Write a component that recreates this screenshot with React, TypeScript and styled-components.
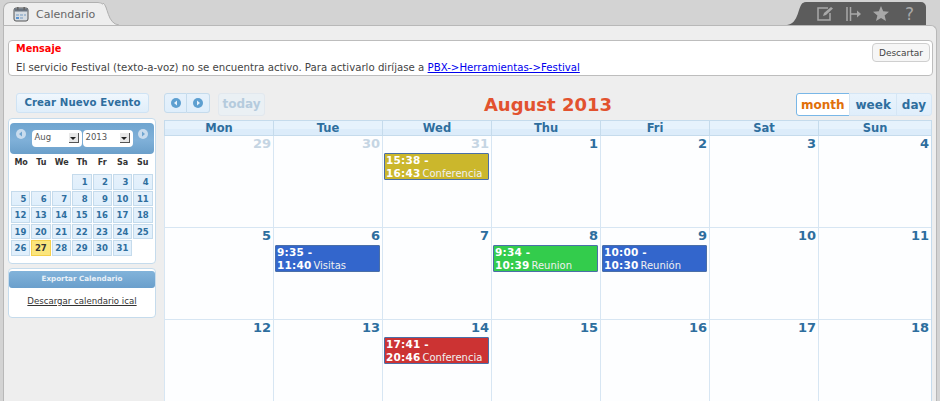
import React from 'react'
import styled, { createGlobalStyle } from 'styled-components'

const GlobalStyle = createGlobalStyle`
  html, body { margin: 0; padding: 0; }
  body { background: #d3d3d3; font-family: "DejaVu Sans", Verdana, sans-serif; overflow: hidden; }
`

type Ev = { start: string; end: string; title: string; color: string }
type Cell = { day: number; muted?: boolean; event?: Ev }

const weeks: Cell[][] = [
  [
    { day: 29, muted: true },
    { day: 30, muted: true },
    { day: 31, muted: true, event: { start: '15:38', end: '16:43', title: 'Conferencia', color: '#cbb72c' } },
    { day: 1 }, { day: 2 }, { day: 3 }, { day: 4 },
  ],
  [
    { day: 5 },
    { day: 6, event: { start: '9:35', end: '11:40', title: 'Visitas', color: '#3366cc' } },
    { day: 7 },
    { day: 8, event: { start: '9:34', end: '10:39', title: 'Reunion', color: '#33cc4c' } },
    { day: 9, event: { start: '10:00', end: '10:30', title: 'Reunión', color: '#3366cc' } },
    { day: 10 }, { day: 11 },
  ],
  [
    { day: 12 }, { day: 13 },
    { day: 14, event: { start: '17:41', end: '20:46', title: 'Conferencia', color: '#cc3333' } },
    { day: 15 }, { day: 16 }, { day: 17 }, { day: 18 },
  ],
]

const miniDays: (number | null)[] = [null, null, null, ...Array.from({ length: 31 }, (_, i) => i + 1)]

const Page = styled.div`
  width: 940px;
  height: 401px;
  overflow: hidden;
`

const TabRow = styled.div`
  display: flex;
  justify-content: space-between;
  align-items: flex-end;
  height: 25px;
  padding: 0 14px 0 3px;
`

const Tab = styled.div`
  position: relative;
  display: flex;
  align-items: center;
  gap: 7px;
  width: 104px;
  height: 23px;
  padding-left: 9px;
  box-sizing: border-box;
  background: #eeeeee;
  border: 1px solid #b0b0b0;
  border-bottom: none;
  border-radius: 7px 9px 0 0;
  color: #666;
  font-size: 11px;
  svg.flare { position: absolute; right: -13px; bottom: 0; }
`

const ToolTab = styled.div`
  position: relative;
  display: flex;
  align-items: center;
  gap: 12px;
  width: 124px;
  height: 23px;
  padding-left: 15px;
  box-sizing: border-box;
  background: #5c5c5c;
  border-radius: 4px 5px 0 0;
  color: #a8a8a8;
  font-size: 17px;
  svg.flare { position: absolute; left: -15px; bottom: 0; }
`

const HelpMark = styled.span`
  margin-left: 4px;
`

const Panel = styled.div`
  margin: 0 3px;
  height: 376px;
  box-sizing: border-box;
  padding: 14px 3px 0 4px;
  background: #eeeeee;
  border: 1px solid #b8b8b8;
  border-bottom: none;
  border-radius: 0 6px 0 0;
`

const Message = styled.div`
  position: relative;
  height: 36px;
  box-sizing: border-box;
  padding: 2px 7px;
  background: #fff;
  border: 1px solid #bdbdbd;
  border-radius: 4px;
  font-size: 10.2px;
  color: #444;
`

const MessageTitle = styled.div`
  color: #ff0000;
  font-weight: bold;
  font-size: 9.7px;
  line-height: 12px;
  margin-bottom: 7px;
`

const MessageLink = styled.a`
  color: #0000ee;
  text-decoration: underline;
`

const Dismiss = styled.button`
  position: absolute;
  top: 2px;
  right: 2px;
  width: 58px;
  height: 19px;
  padding: 0;
  background: #f6f6f6;
  border: 1px solid #cfcfcf;
  border-radius: 4px;
  color: #444;
  font: 9px "DejaVu Sans", sans-serif;
`

const Columns = styled.div`
  display: flex;
  gap: 8px;
  margin-top: 17px;
`

const Sidebar = styled.div`
  flex: 0 0 148px;
  display: flex;
  flex-direction: column;
  gap: 4px;
`

const CreateButton = styled.div`
  align-self: flex-start;
  width: 133px;
  height: 20px;
  margin-left: 8px;
  margin-bottom: 1px;
  box-sizing: border-box;
  line-height: 18px;
  text-align: center;
  background: linear-gradient(#f0f7fd, #dfeefa);
  border: 1px solid #cfe3f4;
  border-radius: 3px;
  color: #2e6e9e;
  font-size: 10.2px;
  font-weight: bold;
  letter-spacing: 0.1px;
`

const MiniBox = styled.div`
  background: #fff;
  border: 1px solid #c5dbec;
  border-radius: 4px;
  padding: 4px 1px 1px;
`

const ExportBox = styled.div`
  background: #fff;
  border: 1px solid #c5dbec;
  border-radius: 4px;
  padding-top: 2px;
`

const MiniHeader = styled.div`
  display: flex;
  align-items: flex-start;
  height: 31px;
  box-sizing: border-box;
  padding: 6px 6px 0;
  background: linear-gradient(#6fa5d0 0%, #7fb0d8 55%, #6a9fca 100%);
  border-radius: 4px;
`

const RoundArrow = styled.span`
  flex: none;
  display: flex;
  width: 10px;
  height: 10px;
  border-radius: 50%;
  background: #c9dcee;
  align-items: center;
  justify-content: center;
`

const Selects = styled.div`
  flex: 1;
  display: flex;
  justify-content: center;
  gap: 1px;
  margin-top: 1px;
`

const FakeSelect = styled.div<{ $w: number }>`
  position: relative;
  width: ${({ $w }) => $w}px;
  height: 17px;
  box-sizing: border-box;
  padding-left: 3px;
  background: #fff;
  border-radius: 4px;
  color: #555;
  font-size: 8.5px;
  line-height: 14px;
  &::after {
    content: '';
    position: absolute;
    top: 3px;
    right: 3px;
    width: 9px;
    height: 9px;
    background: #e8e8e8;
    border-right: 1px solid #555;
    border-bottom: 1px solid #555;
  }
  &::before {
    content: '';
    position: absolute;
    z-index: 1;
    top: 7px;
    right: 6px;
    border: 3px solid transparent;
    border-top-color: #222;
    border-bottom: none;
  }
`

const MiniHead = styled.div`
  display: grid;
  grid-template-columns: repeat(7, 1fr);
  padding: 0 1px;
  height: 20px;
  line-height: 18px;
  text-align: center;
  font-size: 8px;
  font-weight: bold;
  color: #333;
`

const MiniGrid = styled.div`
  display: grid;
  grid-template-columns: repeat(7, 19.4px);
  grid-auto-rows: 15.5px;
  gap: 1px;
  padding: 0 1px 6px 1px;
`

const MiniDay = styled.div<{ $today?: boolean }>`
  box-sizing: border-box;
  padding-right: 3px;
  text-align: right;
  line-height: 14px;
  font-size: 8.5px;
  font-weight: bold;
  color: ${({ $today }) => ($today ? '#363636' : '#2e6e9e')};
  background: ${({ $today }) => ($today ? '#fbe57c' : 'linear-gradient(#e6f1fb, #dfeffc)')};
  border: 1px solid ${({ $today }) => ($today ? '#f5cf4a' : '#c5dbec')};
`

const ExportTitle = styled.div`
  height: 17px;
  line-height: 16px;
  text-align: center;
  background: linear-gradient(#82b3da, #6a9fcc);
  border-radius: 3px;
  color: #e9f1f8;
  font-size: 7.2px;
  font-weight: bold;
`

const ExportLink = styled.a`
  display: block;
  padding: 6px 0 9px;
  height: 14px;
  line-height: 14px;
  text-align: center;
  color: #333;
  font-size: 8.6px;
  text-decoration: underline;
`

const Main = styled.div`
  flex: 0 0 768px;
  display: flex;
  flex-direction: column;
`

const Toolbar = styled.div`
  position: relative;
  display: flex;
  justify-content: space-between;
  height: 22px;
  margin-bottom: 5px;
`

const Group = styled.div`
  display: flex;
  gap: 8px;
  align-items: flex-start;
`

const Segments = styled.div`
  display: flex;
`

const ArrowBtn = styled.div`
  display: flex;
  align-items: center;
  justify-content: center;
  width: 23px;
  height: 20px;
  box-sizing: border-box;
  background: linear-gradient(#e6f1fb, #dfeefb);
  border: 1px solid #c5dbec;
  &:first-child { border-radius: 3px 0 0 3px; }
  &:last-child { border-radius: 0 3px 3px 0; border-left: none; }
  span { background: #5d9fd0; }
`

const Today = styled.div`
  width: 47px;
  height: 23px;
  box-sizing: border-box;
  text-align: center;
  line-height: 21px;
  background: #eaf0f4;
  border: 1px solid #e2e8ee;
  border-radius: 3px;
  color: #b5cbdd;
  font-size: 12px;
  font-weight: bold;
`

const MonthTitle = styled.h2`
  position: absolute;
  left: 0;
  right: 0;
  top: 0;
  margin: 0;
  text-align: center;
  color: #e2522e;
  font-size: 18px;
  line-height: 24px;
  font-weight: bold;
  pointer-events: none;
`

const ViewBtn = styled.div<{ $active?: boolean }>`
  height: 23px;
  padding: 0 5px 0 6px;
  box-sizing: border-box;
  line-height: 22px;
  font-size: 12px;
  font-weight: bold;
  margin-left: -1px;
  color: ${({ $active }) => ($active ? '#e17009' : '#2e6e9e')};
  background: ${({ $active }) => ($active ? '#fff' : 'linear-gradient(#e9f3fc, #dfeefb)')};
  border: 1px solid ${({ $active }) => ($active ? '#79b7e7' : '#d5e6f5')};
  &:first-child { border-radius: 3px 0 0 3px; padding: 0 4px; }
  &:last-child { border-radius: 0 3px 3px 0; padding: 0 5px; }
`

const Grid = styled.div`
  display: grid;
  grid-template-columns: repeat(6, 109px) 1fr;
  border: 1px solid #c5dbec;
  border-left: none;
  border-bottom: none;
  background: #fff;
`

const DayName = styled.div`
  height: 14px;
  line-height: 14px;
  text-align: center;
  font-size: 11.5px;
  font-weight: bold;
  color: #2e6e9e;
  background: linear-gradient(#e6f2fc 60%, #dcecfa 60%);
  border-left: 1px solid #c5dbec;
  border-bottom: 1px solid #c5dbec;
`

const DayCell = styled.div`
  height: 92px;
  box-sizing: border-box;
  padding: 0 2px 0 1px;
  background: #fdfeff;
  border-left: 1px solid #d7e6f3;
  border-bottom: 1px solid #d7e6f3;
`

const DayNumber = styled.div<{ $muted?: boolean }>`
  text-align: right;
  height: 16px;
  line-height: 16px;
  font-size: 13px;
  font-weight: bold;
  color: ${({ $muted }) => ($muted ? '#c5d5e3' : '#2e6e9e')};
`

const EventBox = styled.div<{ $bg: string }>`
  margin-top: 1px;
  height: 27px;
  box-sizing: border-box;
  padding: 0 1px;
  background: ${({ $bg }) => $bg};
  border: 1px solid #4a6fa8;
  border-radius: 1px;
  color: #f0f0f0;
  font-size: 10px;
  line-height: 13px;
  white-space: nowrap;
`

const EventTime = styled.b`
  color: #fff;
  font-size: 10.5px;
  letter-spacing: 0.2px;
  margin-right: 2px;
`

const CalendarIcon = () => (
  <svg width="16" height="16" viewBox="0 0 16 16">
    <rect x="1" y="2" width="14" height="13" rx="2" fill="#d7dde3" stroke="#555" />
    <rect x="1.5" y="2.5" width="13" height="3" fill="#6a7480" />
    <rect x="4" y="1" width="1.6" height="3" fill="#666" />
    <rect x="10.4" y="1" width="1.6" height="3" fill="#666" />
    <rect x="3" y="8" width="3" height="2" fill="#a6bcd2" />
    <rect x="7" y="8" width="3" height="2" fill="#a6bcd2" />
    <rect x="11" y="8" width="2" height="2" fill="#a6bcd2" />
    <rect x="3" y="11" width="3" height="2" fill="#5c94d0" />
    <rect x="7" y="11" width="3" height="2" fill="#a6bcd2" />
  </svg>
)

const Flare = ({ flip, fill, stroke }: { flip?: boolean; fill: string; stroke?: string }) => (
  <svg className="flare" width="16" height="22" viewBox="0 0 16 22" style={flip ? { transform: 'scaleX(-1)' } : undefined}>
    <path d="M0 0 C5 2 4 21 16 22 L0 22 Z" fill={fill} />
    {stroke && <path d="M0 0 C5 2 4 21 16 22" fill="none" stroke={stroke} />}
  </svg>
)

const ChevronDot = ({ right }: { right?: boolean }) => (
  <RoundArrow>
    <svg width="6" height="6" viewBox="0 0 6 6">
      <path d={right ? 'M2 0.5 L5 3 L2 5.5 Z' : 'M4 0.5 L1 3 L4 5.5 Z'} fill="#6fa5d0" />
    </svg>
  </RoundArrow>
)

const NavDot = ({ right }: { right?: boolean }) => (
  <RoundArrow>
    <svg width="6" height="6" viewBox="0 0 6 6">
      <path d={right ? 'M2 0.5 L5 3 L2 5.5 Z' : 'M4 0.5 L1 3 L4 5.5 Z'} fill="#e6f1fb" />
    </svg>
  </RoundArrow>
)

const EditIcon = () => (
  <svg width="17" height="15" viewBox="0 0 17 15" fill="none" stroke="#a8a8a8" strokeWidth="1.5">
    <path d="M11 2 H1 V14 H13 V7" />
    <path d="M6 10 L7 7 L14 1 L16 2.5 L9 9 Z" fill="#a8a8a8" stroke="none" />
  </svg>
)

const AddonIcon = () => (
  <svg width="15" height="14" viewBox="0 0 15 14" fill="none" stroke="#a8a8a8" strokeWidth="1.5">
    <path d="M1 0 V14 M4.5 0 V14 M5 7 H13" />
    <path d="M11 3.5 L15 7 L11 10.5 Z" fill="#a8a8a8" stroke="none" />
  </svg>
)

const StarIcon = () => (
  <svg width="16" height="15" viewBox="0 0 16 15">
    <path d="M8 0 L10.2 5.2 L16 5.7 L11.6 9.4 L13 15 L8 12 L3 15 L4.4 9.4 L0 5.7 L5.8 5.2 Z" fill="#a8a8a8" />
  </svg>
)

const App = () => (
  <Page>
    <GlobalStyle />
    <TabRow>
      <Tab>
        <CalendarIcon />
        Calendario
        <Flare fill="#eeeeee" stroke="#b0b0b0" />
      </Tab>
      <ToolTab>
        <Flare flip fill="#5c5c5c" />
        <EditIcon />
        <AddonIcon />
        <StarIcon />
        <HelpMark>?</HelpMark>
      </ToolTab>
    </TabRow>
    <Panel>
      <Message>
        <MessageTitle>Mensaje</MessageTitle>
        El servicio Festival (texto-a-voz) no se encuentra activo. Para activarlo diríjase a{' '}
        <MessageLink href="#">PBX-&gt;Herramientas-&gt;Festival</MessageLink>
        <Dismiss>Descartar</Dismiss>
      </Message>
      <Columns>
        <Sidebar>
          <CreateButton>Crear Nuevo Evento</CreateButton>
          <MiniBox>
            <MiniHeader>
              <ChevronDot />
              <Selects>
                <FakeSelect $w={50}>Aug</FakeSelect>
                <FakeSelect $w={50}>2013</FakeSelect>
              </Selects>
              <ChevronDot right />
            </MiniHeader>
            <MiniHead>
              {['Mo', 'Tu', 'We', 'Th', 'Fr', 'Sa', 'Su'].map((d) => (
                <span key={d}>{d}</span>
              ))}
            </MiniHead>
            <MiniGrid>
              {miniDays.map((d, i) =>
                d === null ? <span key={i} /> : <MiniDay key={i} $today={d === 27}>{d}</MiniDay>,
              )}
            </MiniGrid>
          </MiniBox>
          <ExportBox>
            <ExportTitle>Exportar Calendario</ExportTitle>
            <ExportLink href="#">Descargar calendario ical</ExportLink>
          </ExportBox>
        </Sidebar>
        <Main>
          <Toolbar>
            <Group>
              <Segments>
                <ArrowBtn><NavDot /></ArrowBtn>
                <ArrowBtn><NavDot right /></ArrowBtn>
              </Segments>
              <Today>today</Today>
            </Group>
            <MonthTitle>August 2013</MonthTitle>
            <Segments>
              <ViewBtn $active>month</ViewBtn>
              <ViewBtn>week</ViewBtn>
              <ViewBtn>day</ViewBtn>
            </Segments>
          </Toolbar>
          <Grid>
            {['Mon', 'Tue', 'Wed', 'Thu', 'Fri', 'Sat', 'Sun'].map((d) => (
              <DayName key={d}>{d}</DayName>
            ))}
            {weeks.flat().map((c, i) => (
              <DayCell key={i}>
                <DayNumber $muted={c.muted}>{c.day}</DayNumber>
                {c.event && (
                  <EventBox $bg={c.event.color}>
                    <EventTime>{c.event.start} -</EventTime>
                    <br />
                    <EventTime>{c.event.end}</EventTime>
                    {c.event.title}
                  </EventBox>
                )}
              </DayCell>
            ))}
          </Grid>
        </Main>
      </Columns>
    </Panel>
  </Page>
)

export default App
